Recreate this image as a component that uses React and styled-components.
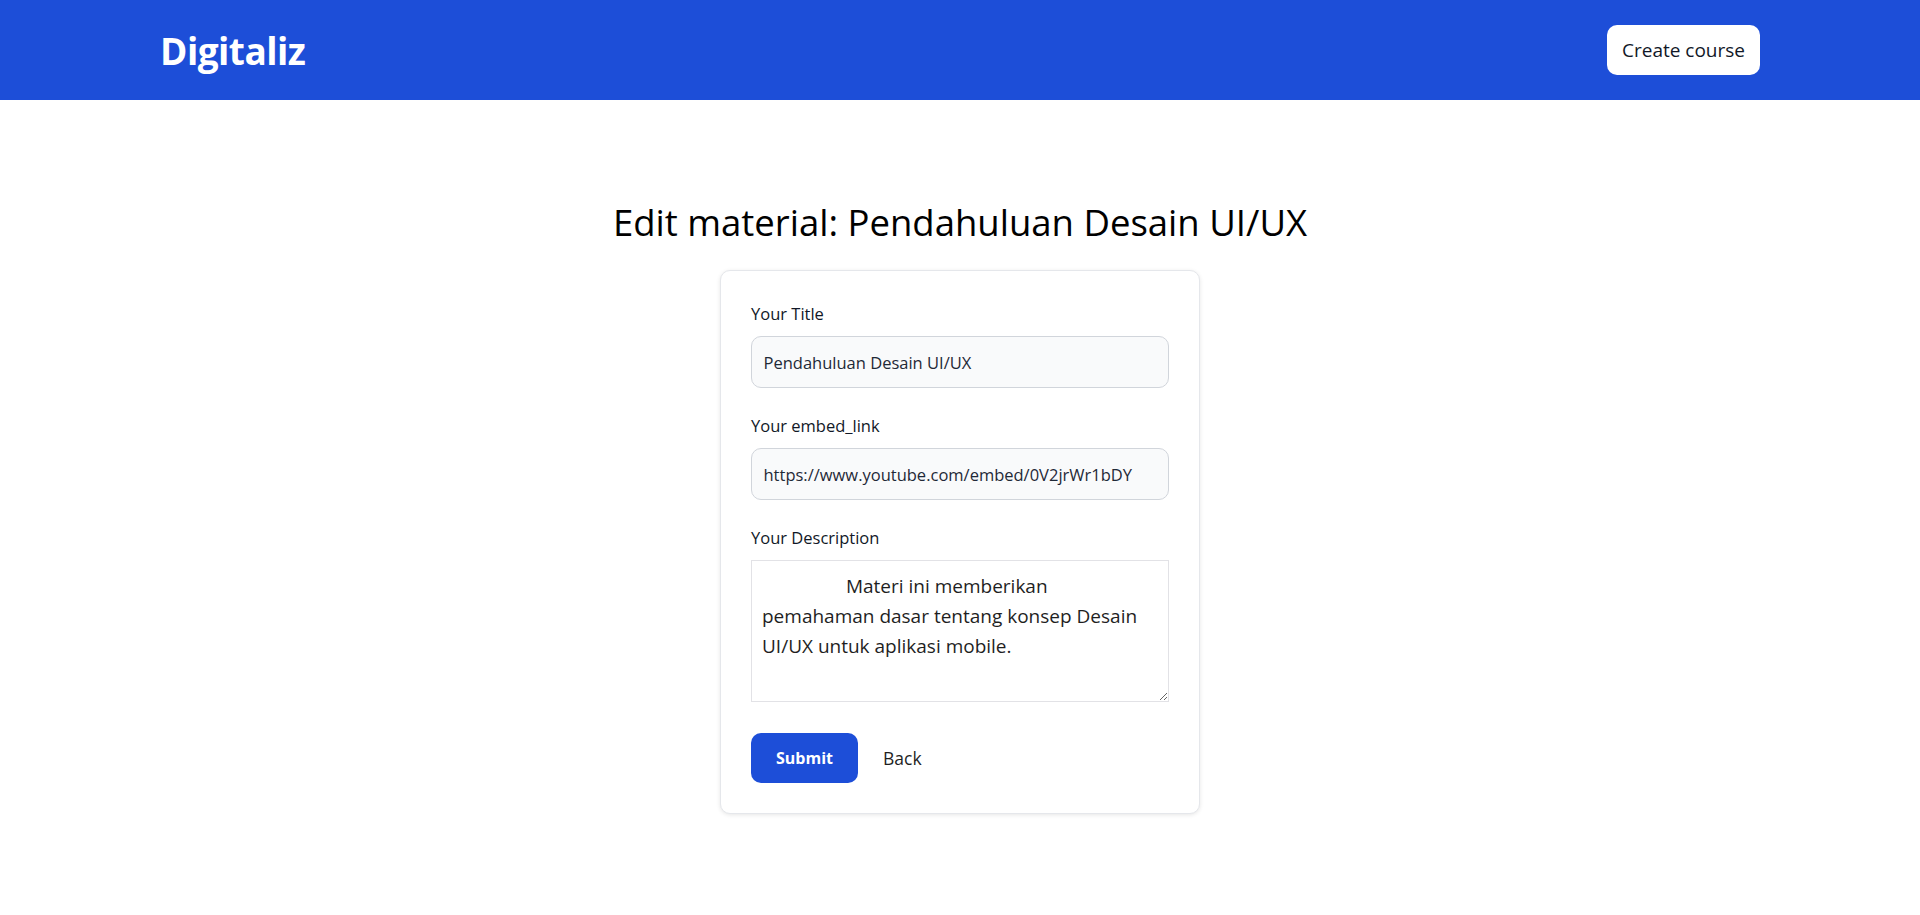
import React, { useState } from "react";
import styled, { createGlobalStyle } from "styled-components";

const GlobalStyle = createGlobalStyle`
  * {
    box-sizing: border-box;
  }
  body {
    margin: 0;
    background: #ffffff;
    font-family: "Open Sans", "Noto Sans", sans-serif;
    color: #111827;
  }
`;

const Navbar = styled.nav`
  background-color: #1d4ed8;
  height: 100px;
`;

const NavInner = styled.div`
  max-width: 1600px;
  height: 100%;
  margin: 0 auto;
  display: flex;
  align-items: center;
  justify-content: space-between;
`;

const Brand = styled.a`
  color: #ffffff;
  font-size: 37px;
  font-weight: 700;
  line-height: 45px;
  text-decoration: none;
  letter-spacing: -0.5px;
`;

const NavButton = styled.button`
  background: #ffffff;
  color: #111827;
  border: none;
  border-radius: 10px;
  padding: 10px 15px;
  font-family: inherit;
  font-size: 19px;
  line-height: 30px;
  cursor: pointer;
`;

const Main = styled.main`
  display: flex;
  flex-direction: column;
  align-items: center;
  padding: 100px 0 60px;
`;

const Title = styled.h1`
  margin: 0 0 25px;
  font-size: 36.5px;
  line-height: 45px;
  font-weight: 500;
  color: #000000;
`;

const Card = styled.form`
  width: 480px;
  padding: 30px;
  background: #ffffff;
  border: 1px solid #e5e7eb;
  border-radius: 10px;
  box-shadow: 0 1px 4px rgba(0, 0, 0, 0.1);
`;

const Field = styled.div`
  margin-bottom: ${(p) => p.$gap || 25}px;
`;

const Label = styled.label`
  display: block;
  margin-bottom: 10px;
  font-size: 16.5px;
  line-height: 25px;
  font-weight: 500;
  color: #111827;
`;

const Input = styled.input`
  display: block;
  width: 100%;
  padding: 12.5px 11.5px;
  background: #f9fafb;
  border: 1.25px solid #d1d5db;
  border-radius: 10px;
  font-family: inherit;
  font-size: 16.5px;
  line-height: 25px;
  color: #1f2937;
  outline: none;
`;

const TextArea = styled.textarea`
  display: block;
  width: 100%;
  height: 142px;
  padding: 10px;
  border: 1px solid #e2e2e6;
  border-radius: 0;
  font-family: inherit;
  font-size: 19px;
  line-height: 30px;
  color: #1f1f1f;
  background: #ffffff;
  outline: none;
`;

const Actions = styled.div`
  display: flex;
  align-items: center;
`;

const Button = styled.button`
  padding: 12.5px 25px;
  border: none;
  border-radius: 10px;
  font-family: inherit;
  font-size: ${(p) => (p.$primary ? 16 : 17.5)}px;
  line-height: 25px;
  cursor: pointer;
  background: ${(p) => (p.$primary ? "#1d4ed8" : "transparent")};
  color: ${(p) => (p.$primary ? "#ffffff" : "#1f1f1f")};
  font-weight: ${(p) => (p.$primary ? 700 : 400)};
`;

const initialDescription =
  "                 Materi ini memberikan\npemahaman dasar tentang konsep Desain\nUI/UX untuk aplikasi mobile.";

export default function App() {
  const [title, setTitle] = useState("Pendahuluan Desain UI/UX");
  const [link, setLink] = useState("https://www.youtube.com/embed/0V2jrWr1bDY");
  const [description, setDescription] = useState(initialDescription);

  return (
    <>
      <GlobalStyle />
      <Navbar>
        <NavInner>
          <Brand href="#">Digitaliz</Brand>
          <NavButton type="button">Create course</NavButton>
        </NavInner>
      </Navbar>
      <Main>
        <Title>Edit material: Pendahuluan Desain UI/UX</Title>
        <Card onSubmit={(e) => e.preventDefault()}>
          <Field>
            <Label htmlFor="title">Your Title</Label>
            <Input id="title" value={title} onChange={(e) => setTitle(e.target.value)} />
          </Field>
          <Field>
            <Label htmlFor="embed_link">Your embed_link</Label>
            <Input id="embed_link" value={link} onChange={(e) => setLink(e.target.value)} />
          </Field>
          <Field $gap={31}>
            <Label htmlFor="description">Your Description</Label>
            <TextArea
              id="description"
              rows={4}
              value={description}
              onChange={(e) => setDescription(e.target.value)}
            />
          </Field>
          <Actions>
            <Button type="submit" $primary>Submit</Button>
            <Button type="button">Back</Button>
          </Actions>
        </Card>
      </Main>
    </>
  );
}
